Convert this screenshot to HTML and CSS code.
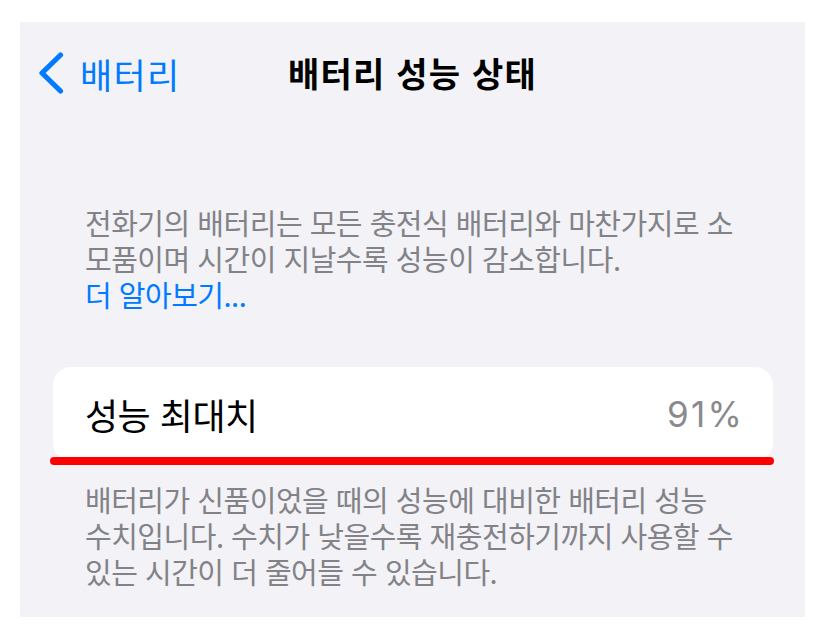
FILE: index.html
```html
<!DOCTYPE html>
<html lang="ko">
<head>
<meta charset="utf-8">
<title>배터리 성능 상태</title>
<link rel="stylesheet" href="styles.css">
</head>
<body>
<div class="panel">
  <header class="nav">
    <a class="back" href="#">
      <svg class="chev" width="26" height="44" viewBox="0 0 26 44" aria-hidden="true">
        <path d="M22.5 4 L4 22 L22.5 40" fill="none" stroke="#007aff" stroke-width="5.2" stroke-linecap="round" stroke-linejoin="round"/>
      </svg>
      <span class="back-label">배터리</span>
    </a>
    <h1 class="title">배터리 성능 상태</h1>
    <div class="spacer"></div>
  </header>

  <p class="footnote intro">전화기의 배터리는 모든 충전식 배터리와 마찬가지로 소<br>모품이며 시간이 지날수록 성능이 감소합니다.<br><a class="link" href="#">더 알아보기...</a></p>

  <div class="card-wrap">
    <div class="card">
      <span class="row-label">성능 최대치</span>
      <span class="row-value">91%</span>
    </div>
    <div class="underline"></div>
  </div>

  <p class="footnote">배터리가 신품이었을 때의 성능에 대비한 배터리 성능<br>수치입니다. 수치가 낮을수록 재충전하기까지 사용할 수<br>있는 시간이 더 줄어들 수 있습니다.</p>
</div>
</body>
</html>
```

FILE: styles.css
```css
html, body {
  margin: 0;
  padding: 0;
  background: #ffffff;
}

body {
  font-family: "Noto Sans CJK KR", "Noto Sans", sans-serif;
  padding-top: 22px;
}

.panel {
  margin: 0 20px;
  height: 595px;
  background: #f2f2f7;
  display: flex;
  flex-direction: column;
}

.nav {
  height: 102px;
  display: grid;
  grid-template-columns: 1fr auto 1fr;
  align-items: center;
  padding: 0 18px;
}

.back {
  display: flex;
  align-items: center;
  gap: 16px;
  color: #007aff;
  text-decoration: none;
}

.chev {
  display: block;
}

.back-label {
  font-size: 35px;
  letter-spacing: 1.3px;
  line-height: 1;
}

.title {
  margin: 0;
  font-size: 34px;
  font-weight: 700;
  letter-spacing: 1.2px;
  color: #000;
  line-height: 1;
}

.footnote {
  margin: 0;
  padding: 0 20px 0 65px;
  font-size: 29px;
  line-height: 36px;
  letter-spacing: -0.5px;
  color: #828287;
}

.intro {
  margin-top: 80px;
}

.link {
  color: #007aff;
  text-decoration: none;
}

.card-wrap {
  position: relative;
  margin: 55px 32px 20px 33px;
}

.card {
  height: 94px;
  background: #ffffff;
  border-radius: 18px;
  display: flex;
  align-items: center;
  justify-content: space-between;
  padding: 0 29px 0 32px;
}

.row-label {
  font-size: 36px;
  letter-spacing: -0.5px;
  color: #000;
}

.row-value {
  font-family: Inter, "Noto Sans", sans-serif;
  font-size: 35px;
  letter-spacing: 2.2px;
  color: #8a8a8e;
}

.underline {
  position: absolute;
  left: -3px;
  right: -1px;
  bottom: -4px;
  height: 8px;
  border-radius: 4px;
  background: #ff0000;
}
```
